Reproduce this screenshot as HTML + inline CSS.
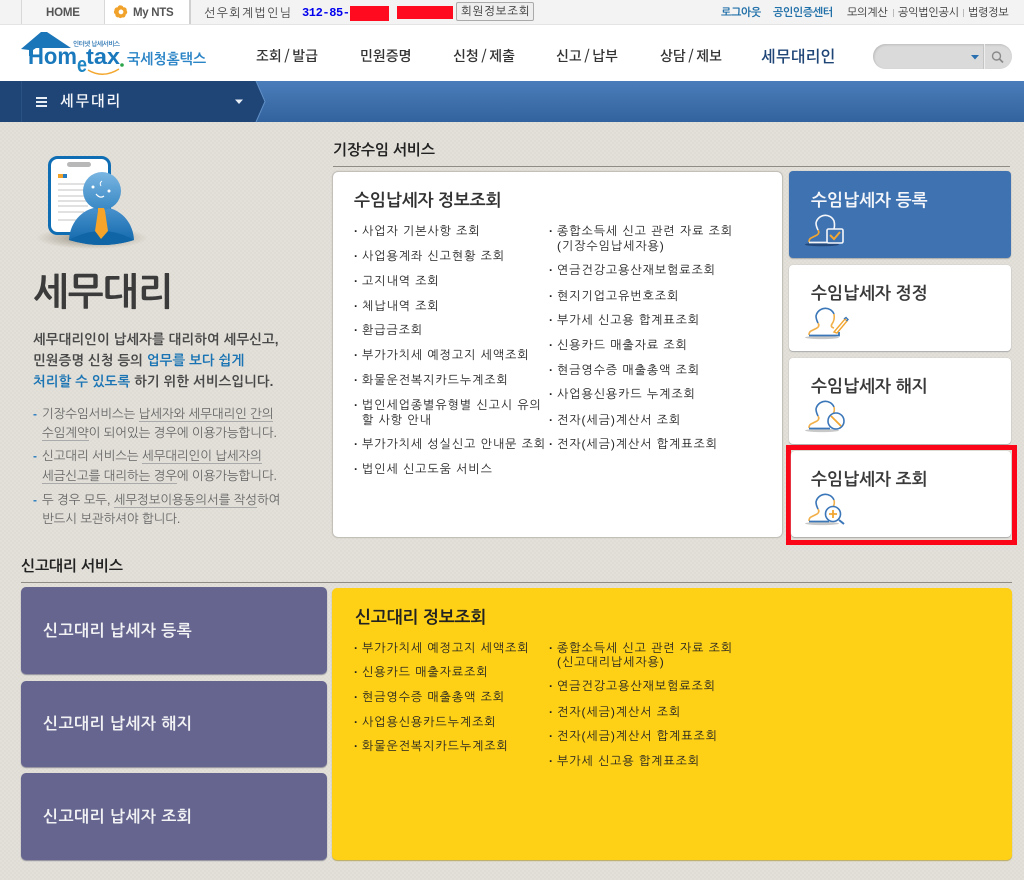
<!DOCTYPE html>
<html lang="ko"><head><meta charset="utf-8"><title>세무대리</title>
<style>
html,body{margin:0;padding:0}
body{width:1024px;height:880px;position:relative;overflow:hidden;background-color:#e3e0d9;background-image:linear-gradient(45deg,#dfdcd5 25%,transparent 25%,transparent 75%,#dfdcd5 75%),linear-gradient(45deg,#dfdcd5 25%,transparent 25%,transparent 75%,#dfdcd5 75%);background-size:4px 4px;background-position:0 0,2px 2px;font-family:"Liberation Sans","NanumGothic","Noto Sans CJK KR",sans-serif}
.a,.t{position:absolute}
.t{white-space:nowrap;line-height:16px;color:#222}
.b{font-weight:700}
.l{font-size:12px;letter-spacing:.95px;color:#222}
.l b{display:inline-block;width:8px;font-weight:700;letter-spacing:0}
.top{font-size:11px;font-weight:700;color:#444;letter-spacing:-.2px}
.nav{font-family:"Noto Sans CJK KR","NanumGothic",sans-serif;font-size:14px;font-weight:500;color:#333;letter-spacing:0;top:48px}
.nav s{text-decoration:none;margin:0 2.5px}
.card{position:absolute;background:#fff;border-radius:4px;box-shadow:0 1px 1px #aaa,0 0 1px #bbb;left:789px;width:222px}
.ct{font-size:17px;font-weight:700;left:811px;color:#3a3a3a;letter-spacing:0}
.pu{position:absolute;left:21px;width:306px;background:#65658f;border-radius:5px;box-shadow:0 1px 1px #8a8a99}
.pt{font-size:16px;font-weight:700;color:#f2f2f5;left:43px;letter-spacing:.45px}
.p{font-size:13.5px;font-weight:700;color:#484848;left:33px;letter-spacing:.1px}
.p i{font-style:normal;color:#1a74b4}
.n{font-size:12.5px;color:#666;left:42px;letter-spacing:-.1px}
.n u{text-decoration:none;border-bottom:1px solid #aaa}
.d{font-size:12px;font-weight:700;color:#2a7cc0;left:33px}
svg{position:absolute;overflow:visible}
</style></head><body>

<!-- top bar -->
<div class="a" style="left:0;top:0;width:1024px;height:25px;background:#f3f3f3;border-bottom:1px solid #e4e4e4;box-sizing:border-box"></div>
<div class="a" style="left:21px;top:0;width:83px;height:24px;background:#f5f5f5;border-left:1px solid #d8d8d8"></div>
<div class="a" style="left:104px;top:0;width:84px;height:24px;background:#fff;border-left:1px solid #d8d8d8;border-right:2px solid #d0d0d0"></div>
<div class="t top" style="left:46px;top:5px;font-size:11.5px;color:#555">HOME</div>
<svg style="left:114px;top:5px" width="14" height="14" viewBox="0 0 14 14"><circle cx="7" cy="7" r="3" fill="#fff"/><path d="M7 0.5a2.5 2.5 0 0 1 2.4 1.9a2.6 2.6 0 0 1 3.2 3.1a2.6 2.6 0 0 1-1 4.1a2.6 2.6 0 0 1-3.4 2.8a2.6 2.6 0 0 1-3.6-.1a2.6 2.6 0 0 1-3.2-2.9a2.6 2.6 0 0 1-.9-4a2.6 2.6 0 0 1 3.1-3A2.5 2.5 0 0 1 7 .5zM7 4.5a2.4 2.4 0 1 0 0 4.8a2.4 2.4 0 0 0 0-4.8z" fill="#f0a22a" fill-rule="evenodd"/></svg>
<div class="t top" style="left:133px;top:5px;font-size:11.5px;color:#555;letter-spacing:-.3px">My NTS</div>
<div class="t" style="left:204px;top:5px;font-size:12px;color:#444;letter-spacing:1.35px">선우회계법인님</div>
<div class="t b" style="left:302px;top:5px;font-size:12px;color:#0000ee;font-family:'Liberation Mono',monospace;letter-spacing:-.4px">312-85-</div>
<div class="a" style="left:350px;top:6px;width:39px;height:15px;background:#ff0a1e"></div>
<div class="a" style="left:397px;top:6px;width:56px;height:13px;background:#ff0a1e"></div>
<div class="a" style="left:456px;top:2px;width:78px;height:19px;box-sizing:border-box;background:#eee;border:1px solid #aaa;border-radius:2px"></div>
<div class="t" style="left:461px;top:4px;font-size:11.5px;color:#333;letter-spacing:.75px">회원정보조회</div>
<div class="t top" style="left:721px;top:5px;color:#1f6fa8;letter-spacing:-.4px">로그아웃</div>
<div class="t top" style="left:773px;top:5px;color:#1f6fa8;letter-spacing:-.4px">공인인증센터</div>
<div class="t top" style="left:847px;top:5px;font-weight:400;color:#333">모의계산</div>
<div class="a" style="left:893px;top:9px;width:1px;height:8px;background:#bbb"></div>
<div class="t top" style="left:898px;top:5px;font-weight:400;color:#333">공익법인공시</div>
<div class="a" style="left:963px;top:9px;width:1px;height:8px;background:#bbb"></div>
<div class="t top" style="left:968px;top:5px;font-weight:400;color:#333">법령정보</div>

<!-- header -->
<div class="a" style="left:0;top:25px;width:1024px;height:56px;background:#fff"></div>
<svg style="left:0;top:0" width="215" height="80" viewBox="0 0 215 80">
<path d="M21 49L41 32H47L71 48H36L33 50V56H29V50z" fill="#1a76b8"/>
<text x="28" y="64" font-family="Liberation Sans,sans-serif" font-weight="700" font-size="23" fill="#1a78bc" textLength="49" lengthAdjust="spacingAndGlyphs">Hom</text>
<text x="77" y="72" font-family="Liberation Sans,sans-serif" font-weight="700" font-size="22" fill="#1f86c4" textLength="10" lengthAdjust="spacingAndGlyphs">e</text>
<text x="86" y="64" font-family="Liberation Sans,sans-serif" font-weight="700" font-size="22" fill="#1a78bc" textLength="34" lengthAdjust="spacingAndGlyphs">tax</text>
<circle cx="122" cy="65" r="1.8" fill="#2aa54a"/>
<path d="M88 70Q103 79 119 69" stroke="#f3a72e" stroke-width="1.5" fill="none"/>
<text x="73" y="46" font-family="NanumGothic,sans-serif" font-size="6.5" font-weight="700" fill="#3a7fb8" textLength="47">인터넷 납세서비스</text>
<text x="127" y="64" font-family="NanumGothic,sans-serif" font-size="14.5" font-weight="700" fill="#2a84c6" textLength="79" lengthAdjust="spacingAndGlyphs">국세청홈택스</text>
</svg>
<div class="t nav" style="left:256px">조회<s>/</s>발급</div>
<div class="t nav" style="left:360px">민원증명</div>
<div class="t nav" style="left:453px">신청<s>/</s>제출</div>
<div class="t nav" style="left:556px">신고<s>/</s>납부</div>
<div class="t nav" style="left:660px">상담<s>/</s>제보</div>
<div class="t nav" style="left:761px;top:47px;font-size:16px;color:#1f4577;letter-spacing:.2px">세무대리인</div>
<div class="a" style="left:873px;top:44px;width:139px;height:25px;background:#dadada;border-radius:13px;box-shadow:inset 1px 1px 2px #bbb"></div>
<div class="a" style="left:983px;top:44px;width:1px;height:25px;background:#c4c4c4;border-right:1px solid #eee"></div>
<svg style="left:970px;top:54px" width="10" height="6"><path d="M1 1H9L5 5.5z" fill="#2a6fb0"/></svg>
<svg style="left:990px;top:50px" width="14" height="14" viewBox="0 0 14 14"><circle cx="6.5" cy="6" r="4" fill="none" stroke="#8a8a8a" stroke-width="1.4"/><path d="M9.5 9L13 12.5" stroke="#8a8a8a" stroke-width="1.8"/></svg>

<!-- blue bar -->
<div class="a" style="left:0;top:81px;width:1024px;height:41px;background:linear-gradient(#4a7dba,#33639e)"></div>
<svg style="left:0;top:81px" width="270" height="41"><path d="M0 0H256L265 20.5L256 41H0z" fill="#1f4577"/><path d="M21.5 0V41" stroke="#2a5283"/><path d="M256 0L265 20.5L256 41" stroke="#5f8fc6" fill="none"/></svg>
<div class="a" style="left:36px;top:97px;width:11px;height:2px;background:#e8eef5;box-shadow:0 4px 0 #e8eef5,0 8px 0 #e8eef5"></div>
<div class="t" style="left:60px;top:93px;font-family:'Noto Sans CJK KR','NanumGothic',sans-serif;font-size:15px;font-weight:500;color:#f5f7fa;letter-spacing:1.7px">세무대리</div>
<svg style="left:234px;top:99px" width="10" height="6"><path d="M1 .5H9L5 5z" fill="#e8eef5"/></svg>

<!-- left illustration -->
<svg style="left:30px;top:150px" width="130" height="110" viewBox="30 150 130 110">
<defs><radialGradient id="sh"><stop offset="0" stop-color="#6b5f4c" stop-opacity=".75"/><stop offset="1" stop-color="#8a7f6c" stop-opacity="0"/></radialGradient>
<linearGradient id="hd" x1="0" y1="0" x2="0" y2="1"><stop offset="0" stop-color="#7ab6e2"/><stop offset="1" stop-color="#3787c4"/></linearGradient>
<linearGradient id="bd" x1="0" y1="0" x2="0" y2="1"><stop offset="0" stop-color="#4a93cf"/><stop offset="1" stop-color="#0f66a8"/></linearGradient></defs>
<ellipse cx="92" cy="238" rx="56" ry="11" fill="url(#sh)"/>
<rect x="49.5" y="157.5" width="60" height="76" rx="8" fill="#fff" stroke="#0f6db4" stroke-width="3"/>
<rect x="67" y="162" width="24" height="5" rx="2.5" fill="#b8b8b8"/>
<rect x="58" y="174" width="5" height="4" fill="#f0a22a"/><rect x="63" y="174" width="4" height="4" fill="#2a7cc0"/>
<path d="M58 184H92M58 190H92M58 196H92M58 201H92M58 206H88M58 212H84M58 220H80" stroke="#cfcfcf" stroke-width="1.2"/>
<path d="M69 240C70 220 85 207 101 207C118 207 133 220 134 240Q102 250 69 240z" fill="url(#bd)"/>
<path d="M69 240Q102 222 134 240Q102 250 69 240z" fill="#0f65a6"/>
<circle cx="102" cy="191" r="19" fill="url(#hd)"/>
<circle cx="93" cy="187" r="1.5" fill="#fff"/><circle cx="109" cy="191" r="1.5" fill="#fff"/>
<path d="M96 194Q100 199 104 196" stroke="#fff" stroke-width="1.2" fill="none"/><path d="M102 181Q99 183 101 186" stroke="#fff" stroke-width="1" fill="none"/>
<path d="M98 208H104L105 211L108 231L101 239L95 231L98 211z" fill="#f6a42a"/>
</svg>

<div class="t b" style="left:33px;top:272px;font-size:38px;line-height:42px;color:#3b3b3b;letter-spacing:-.8px">세무대리</div>
<div class="t p" style="top:332px">세무대리인이 납세자를 대리하여 세무신고,</div>
<div class="t p" style="top:353px">민원증명 신청 등의 <i>업무를 보다 쉽게</i></div>
<div class="t p" style="top:374px"><i>처리할 수 있도록</i> 하기 위한 서비스입니다.</div>
<div class="t d" style="top:406px">-</div><div class="t n" style="top:406px">기장수임서비스는 <u>납세자와 세무대리인 간의</u></div>
<div class="t n" style="top:425px"><u>수임계약</u>이 되어있는 경우에 이용가능합니다.</div>
<div class="t d" style="top:448px">-</div><div class="t n" style="top:448px">신고대리 서비스는 <u>세무대리인이 납세자의</u></div>
<div class="t n" style="top:468px"><u>세금신고를 대리하는 경우</u>에 이용가능합니다.</div>
<div class="t d" style="top:492px">-</div><div class="t n" style="top:492px">두 경우 모두, <u>세무정보이용동의서를 작성</u>하여</div>
<div class="t n" style="top:511px">반드시 보관하셔야 합니다.</div>

<!-- section 1 -->
<div class="t b" style="left:333px;top:143px;font-size:15px;color:#222;letter-spacing:-.15px">기장수임 서비스</div>
<div class="a" style="left:333px;top:166px;width:677px;height:1px;background:#8f8c86"></div>
<div class="a" style="left:333px;top:172px;width:449px;height:365px;background:#fff;border-radius:5px;box-shadow:0 0 1px 1px #bdbab3"></div>
<div class="t b" style="left:354px;top:193px;font-size:17px;color:#333;letter-spacing:-.1px">수임납세자 정보조회</div>

<div class="t l" style="left:354px;top:223px"><b>·</b>사업자 기본사항 조회</div>
<div class="t l" style="left:354px;top:248px"><b>·</b>사업용계좌 신고현황 조회</div>
<div class="t l" style="left:354px;top:273px"><b>·</b>고지내역 조회</div>
<div class="t l" style="left:354px;top:298px"><b>·</b>체납내역 조회</div>
<div class="t l" style="left:354px;top:322px"><b>·</b>환급금조회</div>
<div class="t l" style="left:354px;top:347px"><b>·</b>부가가치세 예정고지 세액조회</div>
<div class="t l" style="left:354px;top:372px"><b>·</b>화물운전복지카드누계조회</div>
<div class="t l" style="left:354px;top:397px"><b>·</b>법인세업종별유형별 신고시 유의</div>
<div class="t l" style="left:362px;top:412px">할 사항 안내</div>
<div class="t l" style="left:354px;top:436px"><b>·</b>부가가치세 성실신고 안내문 조회</div>
<div class="t l" style="left:354px;top:461px"><b>·</b>법인세 신고도움 서비스</div>

<div class="t l" style="left:549px;top:223px"><b>·</b>종합소득세 신고 관련 자료 조회</div>
<div class="t l" style="left:557px;top:238px">(기장수임납세자용)</div>
<div class="t l" style="left:549px;top:262px"><b>·</b>연금건강고용산재보험료조회</div>
<div class="t l" style="left:549px;top:288px"><b>·</b>현지기업고유번호조회</div>
<div class="t l" style="left:549px;top:312px"><b>·</b>부가세 신고용 합계표조회</div>
<div class="t l" style="left:549px;top:337px"><b>·</b>신용카드 매출자료 조회</div>
<div class="t l" style="left:549px;top:362px"><b>·</b>현금영수증 매출총액 조회</div>
<div class="t l" style="left:549px;top:386px"><b>·</b>사업용신용카드 누계조회</div>
<div class="t l" style="left:549px;top:412px"><b>·</b>전자(세금)계산서 조회</div>
<div class="t l" style="left:549px;top:436px"><b>·</b>전자(세금)계산서 합계표조회</div>

<!-- right cards -->
<div class="card" style="top:171px;height:87px;background:#3f72b0"></div>
<div class="card" style="top:265px;height:86px"></div>
<div class="card" style="top:358px;height:86px"></div>
<div class="a" style="left:786px;top:445px;width:231px;height:100px;box-sizing:border-box;border:5px solid #fb0519;background:#e3e0d9"></div>
<div class="card" style="top:451px;height:86px;left:791px;width:220px"></div>
<div class="t ct" style="top:193px;color:#f4f6fa">수임납세자 등록</div>
<div class="t ct" style="top:286px">수임납세자 정정</div>
<div class="t ct" style="top:379px">수임납세자 해지</div>
<div class="t ct" style="top:472px">수임납세자 조회</div>

<!-- card icons -->
<svg style="left:800px;top:205px" width="50" height="42" viewBox="0 0 50 42">
<ellipse cx="22" cy="39.5" rx="17" ry="1.8" fill="#23497c"/>
<path d="M9 37Q9 34 11 33L17 30Q20 28 18 25" fill="none" stroke="#f2a632" stroke-width="1.6"/>
<path d="M18 25Q16 21 16 18A9.5 9.5 0 0 1 34 16Q35 20 34 24" fill="none" stroke="#f4f6fa" stroke-width="1.6"/>
<path d="M9 37.5H43" stroke="#f4f6fa" stroke-width="1.8"/>
<rect x="27" y="24" width="16" height="14" rx="1.5" fill="#3f72b0" stroke="#f4f6fa" stroke-width="1.6"/>
<path d="M30 30L34 34L40 27" fill="none" stroke="#f2a632" stroke-width="2"/>
</svg>
<svg style="left:800px;top:298px" width="50" height="42" viewBox="0 0 50 42">
<ellipse cx="22" cy="39.5" rx="17" ry="1.6" fill="#c8c8c8"/>
<path d="M9 37Q9 34 11 33L17 30Q20 28 18 25" fill="none" stroke="#f2b04a" stroke-width="1.6"/>
<path d="M18 25Q16 21 16 18A9.5 9.5 0 0 1 34 16" fill="none" stroke="#3a76b8" stroke-width="1.6"/>
<path d="M34 16Q35 22 32 26Q30 29 34 30" fill="none" stroke="#f2b04a" stroke-width="1.6"/>
<path d="M9 37.5H39V34" fill="none" stroke="#3a76b8" stroke-width="1.8"/>
<path d="M34 34L45 21L47 23L37 35z" fill="#fff" stroke="#f2a632" stroke-width="1.4"/><path d="M44 21L46 19.5L48 21.5L46.5 23" stroke="#3a76b8" stroke-width="1.4" fill="none"/>
</svg>
<svg style="left:800px;top:391px" width="50" height="42" viewBox="0 0 50 42">
<ellipse cx="22" cy="39.5" rx="17" ry="1.6" fill="#c8c8c8"/>
<path d="M9 37Q9 34 11 33L17 30Q20 28 18 25" fill="none" stroke="#f2b04a" stroke-width="1.6"/>
<path d="M18 25Q16 21 16 18A9.5 9.5 0 0 1 34 16" fill="none" stroke="#3a76b8" stroke-width="1.6"/>
<path d="M34 16Q35 20 33 23" fill="none" stroke="#f2b04a" stroke-width="1.6"/>
<path d="M9 37.5H30" stroke="#3a76b8" stroke-width="1.8"/>
<circle cx="36" cy="30" r="8" fill="#fff" stroke="#3a76b8" stroke-width="1.6"/>
<path d="M31 25L41 35" stroke="#f2a632" stroke-width="1.8"/>
</svg>
<svg style="left:800px;top:484px" width="50" height="42" viewBox="0 0 50 42">
<ellipse cx="22" cy="39.5" rx="17" ry="1.6" fill="#c8c8c8"/>
<path d="M9 37Q9 34 11 33L17 30Q20 28 18 25" fill="none" stroke="#f2b04a" stroke-width="1.6"/>
<path d="M18 25Q16 21 16 18A9.5 9.5 0 0 1 34 16" fill="none" stroke="#3a76b8" stroke-width="1.6"/>
<path d="M34 16Q35 20 33 23" fill="none" stroke="#f2b04a" stroke-width="1.6"/>
<path d="M9 37.5H29" stroke="#3a76b8" stroke-width="1.8"/>
<circle cx="33" cy="30" r="7.5" fill="#fff" stroke="#3a76b8" stroke-width="1.6"/>
<path d="M33 26V34M29 30H37" stroke="#f2a632" stroke-width="1.8"/>
<path d="M39 36L44 40" stroke="#3a76b8" stroke-width="2"/>
</svg>

<!-- section 2 -->
<div class="t b" style="left:21px;top:559px;font-size:15px;color:#222;letter-spacing:-.15px">신고대리 서비스</div>
<div class="a" style="left:21px;top:582px;width:991px;height:1px;background:#8f8c86"></div>
<div class="pu" style="top:587px;height:87px"></div>
<div class="pu" style="top:681px;height:86px"></div>
<div class="pu" style="top:773px;height:87px"></div>
<div class="t pt" style="top:624px">신고대리 납세자 등록</div>
<div class="t pt" style="top:717px">신고대리 납세자 해지</div>
<div class="t pt" style="top:810px">신고대리 납세자 조회</div>
<div class="a" style="left:332px;top:588px;width:680px;height:272px;background:#fed016;border-radius:5px;box-shadow:0 1px 1px #b8a75a"></div>
<div class="t b" style="left:355px;top:610px;font-size:17px;color:#222;letter-spacing:-.15px">신고대리 정보조회</div>

<div class="t l" style="left:354px;top:640px"><b>·</b>부가가치세 예정고지 세액조회</div>
<div class="t l" style="left:354px;top:664px"><b>·</b>신용카드 매출자료조회</div>
<div class="t l" style="left:354px;top:689px"><b>·</b>현금영수증 매출총액 조회</div>
<div class="t l" style="left:354px;top:714px"><b>·</b>사업용신용카드누계조회</div>
<div class="t l" style="left:354px;top:738px"><b>·</b>화물운전복지카드누계조회</div>
<div class="t l" style="left:549px;top:640px"><b>·</b>종합소득세 신고 관련 자료 조회</div>
<div class="t l" style="left:557px;top:654px">(신고대리납세자용)</div>
<div class="t l" style="left:549px;top:678px"><b>·</b>연금건강고용산재보험료조회</div>
<div class="t l" style="left:549px;top:704px"><b>·</b>전자(세금)계산서 조회</div>
<div class="t l" style="left:549px;top:728px"><b>·</b>전자(세금)계산서 합계표조회</div>
<div class="t l" style="left:549px;top:753px"><b>·</b>부가세 신고용 합계표조회</div>
</body></html>
